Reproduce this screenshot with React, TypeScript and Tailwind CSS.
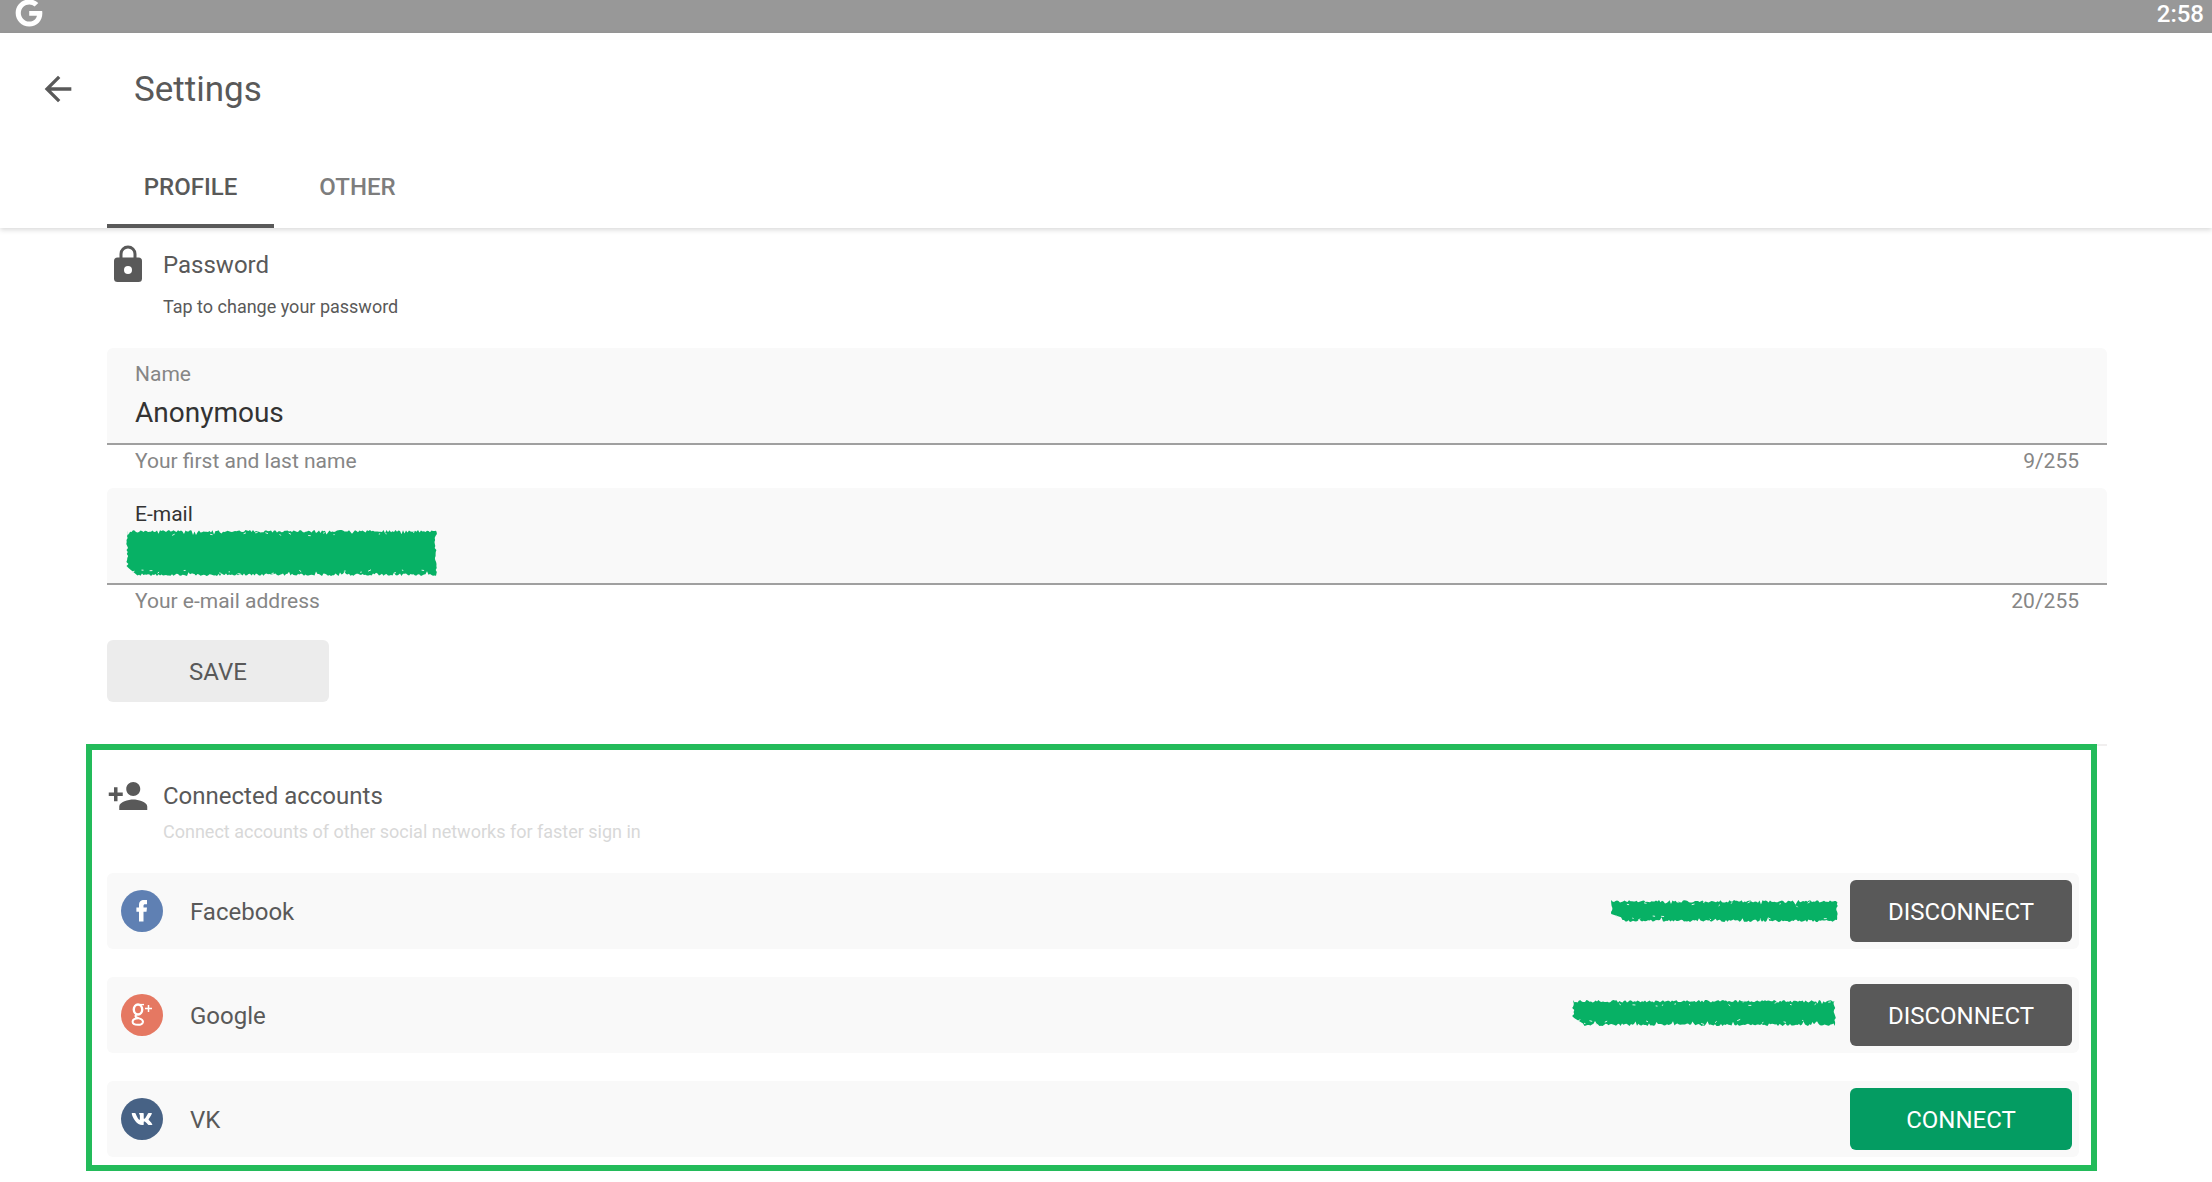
import React, { useState } from "react";
import { FaVk, FaGoogle } from "react-icons/fa";
import { MdArrowBack, MdPersonAdd } from "react-icons/md";

// Small seeded generator so the brush strokes keep the same edge on every render
const makeNoise = (seed: number) => {
  let s = seed;
  return () => {
    s = (s * 16807) % 2147483647;
    return s / 2147483647;
  };
};

const strokePath = (width: number, height: number, notch: number, seed: number) => {
  const rand = makeNoise(seed);
  const depth = () => (rand() * (rand() > 0.85 ? 5 : 2.5)).toFixed(1);
  const points: string[] = [];
  for (let x = 1; x < width; x += 1.5) {
    points.push(`${x},${depth()}`);
  }
  for (let y = 2; y < height - 2; y += 2) {
    points.push(`${(width - rand() * 2.5).toFixed(1)},${y}`);
  }
  for (let x = width - 1; x > notch; x -= 1.5) {
    points.push(`${x},${height - Number(depth())}`);
  }
  for (let y = height - 8; y > 2; y -= 2) {
    points.push(`${(rand() * 2.5).toFixed(1)},${y}`);
  }
  return `M${points.join("L")}Z`;
};

// Light flecks where the brush left the paper bare, close to the long edges
const fleckPath = (width: number, height: number, seed: number) => {
  const rand = makeNoise(seed + 5);
  let d = "";
  for (let x = 6; x < width - 6; x += 5 + rand() * 12) {
    const y = rand() > 0.5 ? 2 + rand() * 4 : height - 2 - rand() * 4;
    d += `M${x.toFixed(1)} ${y.toFixed(1)}l${(1 + rand() * 2).toFixed(1)} ${(rand() * 3 - 1.5).toFixed(1)}`;
  }
  return d;
};

type ScribbleProps = {
  width: number;
  height: number;
  notch: number;
  seed: number;
  className?: string;
};

const Scribble = ({ width, height, notch, seed, className }: ScribbleProps) => (
  <svg
    width={width}
    height={height}
    viewBox={`0 0 ${width} ${height}`}
    className={className}
    aria-hidden="true"
  >
    <path d={strokePath(width, height, notch, seed)} fill="#07b165" />
    <path d={fleckPath(width, height, seed)} stroke="#d9f2e6" strokeWidth="1" />
  </svg>
);

const FacebookIcon = () => (
  <svg width="42" height="42" viewBox="0 0 42 42" fill="#fff" aria-hidden="true">
    <path d="M18 31.500V21.800h-2.600v-4.200H18v-2.300c0-3.600 1.800-5.200 5-5.200h3v4.100h-1.800c-1.300 0-1.700.5-1.700 1.600v1.800H26l-.5 4.200h-3v9.700z" />
  </svg>
);

const GooglePlusIcon = () => (
  <svg width="42" height="42" viewBox="0 0 42 42" fill="none" stroke="#fff" aria-hidden="true">
    <ellipse cx="17" cy="15.5" rx="4.2" ry="5" strokeWidth="2.4" />
    <path d="M19 10.6h4" strokeWidth="1.4" />
    <path
      d="M15.5 20.5c-2.6 2 .2 3.2 2.6 3.900 3.200 1 4.200 2 3.800 3.800-.5 2-2.700 2.600-5 2.600-3 0-5.300-1-5.300-3 0-2.300 2.400-3.400 6-3.500"
      strokeWidth="2"
    />
    <path d="M27.5 11v7M24 14.5h7" strokeWidth="1.5" />
  </svg>
);

const LockIcon = () => (
  <svg width="28" height="37" viewBox="0 0 28 37" aria-hidden="true">
    <path d="M7 14V9a7 7 0 0 1 14 0v5" fill="none" stroke="#595959" strokeWidth="3" />
    <rect y="12.5" width="28" height="24.5" rx="3.5" fill="#595959" />
    <circle cx="14" cy="25" r="4" fill="#fff" />
  </svg>
);

type FieldProps = {
  id: string;
  label: string;
  labelClass: string;
  helper: string;
  counter: string;
  value: string;
  onChange: (value: string) => void;
  children?: React.ReactNode;
};

const Field = ({ id, label, labelClass, helper, counter, value, onChange, children }: FieldProps) => (
  <div className="h-[140px]">
    <div className="relative h-[97px] rounded-t-md border-b-2 border-[#a0a0a0] bg-[#f9f9f9] px-7 pt-3.5">
      <label htmlFor={id} className={labelClass}>
        {label}
      </label>
      <input
        id={id}
        type="text"
        value={value}
        onChange={(e) => onChange(e.target.value)}
        className="mt-1.5 block h-10 w-full bg-transparent text-[28px] text-[#333333] outline-none"
      />
      {children}
    </div>
    <div className="flex justify-between px-7 pt-1 text-[21px] leading-6 text-[#868686]">
      <span>{helper}</span>
      <span>{counter}</span>
    </div>
  </div>
);

const accounts = [
  {
    name: "Facebook",
    badgeClass: "bg-[#5f80b3]",
    icon: <FacebookIcon />,
    owner: <Scribble width={228} height={22} notch={10} seed={71} className="mr-3" />,
    connected: true,
  },
  {
    name: "Google",
    badgeClass: "bg-[#e57862]",
    icon: <GooglePlusIcon />,
    owner: <Scribble width={264} height={26} notch={10} seed={913} className="mr-3.5 mb-1" />,
    connected: true,
  },
  {
    name: "VK",
    badgeClass: "bg-[#476285]",
    icon: <FaVk size={22} />,
    owner: null,
    connected: false,
  },
];

const App = () => {
  const [tab, setTab] = useState("PROFILE");
  const [name, setName] = useState("Anonymous");
  const [email, setEmail] = useState("");

  return (
    <div className="min-h-screen bg-white font-[Roboto,sans-serif] text-2xl text-[#595959]">
      {/* Status bar */}
      <div className="flex h-[33px] items-start justify-between overflow-hidden bg-[#989898] pr-2 pl-[15px] text-white">
        <FaGoogle size={28} className="-mt-px" />
        <span className="leading-7 font-medium">2:58</span>
      </div>

      {/* App bar */}
      <header className="h-[195px] shadow-[0_2px_5px_rgba(0,0,0,0.15)]">
        <div className="flex h-28 items-center pl-[38px]">
          <button type="button" aria-label="Back" className="mr-14">
            <MdArrowBack size={40} />
          </button>
          <h1 className="pt-0.5 text-[35px]">Settings</h1>
        </div>
        <div className="flex h-[83px] pl-[107px]" role="tablist">
          {["PROFILE", "OTHER"].map((item) => (
            <button
              key={item}
              type="button"
              role="tab"
              aria-selected={tab === item}
              onClick={() => setTab(item)}
              className={
                tab === item
                  ? "w-[167px] border-b-4 border-[#595959] pt-1 font-medium"
                  : "w-[167px] border-b-4 border-transparent pt-1 font-medium text-[#7d7d7d]"
              }
            >
              {item}
            </button>
          ))}
        </div>
      </header>

      <main className="pt-3.5 pr-[105px] pl-[107px]">
        <button type="button" className="flex h-[106px] pt-[3px] pl-[7px] text-left">
          <LockIcon />
          <span className="ml-[21px] pt-0.5">
            <span className="block h-12 leading-9">Password</span>
            <span className="block text-lg leading-6">Tap to change your password</span>
          </span>
        </button>

        <form onSubmit={(e) => e.preventDefault()}>
          <Field
            id="name"
            label="Name"
            labelClass="block text-[21px] leading-6 text-[#868686]"
            helper="Your first and last name"
            counter="9/255"
            value={name}
            onChange={setName}
          />
          <Field
            id="email"
            label="E-mail"
            labelClass="block text-[21px] leading-6 text-[#333333]"
            helper="Your e-mail address"
            counter="20/255"
            value={email}
            onChange={setEmail}
          >
            <Scribble
              width={311}
              height={46}
              notch={10}
              seed={37}
              className="absolute top-[42px] left-[19px]"
            />
          </Field>
          <button type="submit" className="mt-3 h-[62px] w-[222px] rounded-md bg-[#ececec] pt-0.5">
            SAVE
          </button>
        </form>

        <hr className="mt-[42px] border-t-2 border-[#f1efef]" />

        {/* Connected accounts */}
        <section className="-mt-0.5 mr-2.5 -ml-[21px] border-[6px] border-[#23bb5a] pt-7 pr-3 pb-2 pl-[15px]">
          <div className="flex h-[95px]">
            <MdPersonAdd size={42} className="-mt-[3px]" />
            <div className="ml-3.5">
              <h2 className="h-[42px] leading-9">Connected accounts</h2>
              <p className="text-lg leading-6 text-[#d8d8d8]">
                Connect accounts of other social networks for faster sign in
              </p>
            </div>
          </div>
          <ul className="flex flex-col gap-7">
            {accounts.map((account) => (
              <li
                key={account.name}
                className="flex h-[76px] items-center rounded-md bg-[#f9f9f9] pr-[7px] pl-3.5"
              >
                <span
                  className={`flex size-[42px] shrink-0 items-center justify-center rounded-full text-white ${account.badgeClass}`}
                >
                  {account.icon}
                </span>
                <span className="ml-[27px] flex-1 pt-0.5">{account.name}</span>
                {account.owner}
                <button
                  type="button"
                  className={
                    account.connected
                      ? "h-[62px] w-[222px] rounded-md bg-[#595959] pt-0.5 text-white"
                      : "h-[62px] w-[222px] rounded-md bg-[#049c62] pt-0.5 text-white"
                  }
                >
                  {account.connected ? "DISCONNECT" : "CONNECT"}
                </button>
              </li>
            ))}
          </ul>
        </section>
      </main>
    </div>
  );
};

export default App;
